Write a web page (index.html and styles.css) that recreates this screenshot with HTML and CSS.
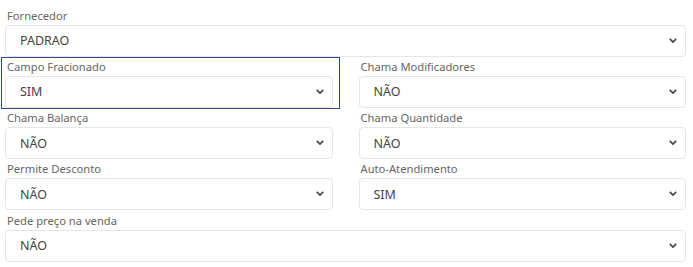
FILE: index.html
```html
<!DOCTYPE html>
<html lang="pt-BR">
<head>
    <meta charset="UTF-8">
    <meta name="viewport" content="width=device-width, initial-scale=1.0">
    <title>Produto - Configurações</title>
    <link rel="stylesheet" href="styles.css">
</head>
<body>

    <form class="product-form">
        <div class="form-group full">
            <label for="fornecedor">Fornecedor</label>
            <div class="select-wrap">
                <select id="fornecedor" name="fornecedor">
                    <option>PADRAO</option>
                </select>
                <svg class="chevron" viewBox="0 0 10 6"><path d="M1 1l4 4 4-4"/></svg>
            </div>
        </div>

        <div class="form-group focused">
            <label for="campoFracionado">Campo Fracionado</label>
            <div class="select-wrap">
                <select id="campoFracionado" name="campoFracionado">
                    <option>SIM</option>
                    <option>NÃO</option>
                </select>
                <svg class="chevron" viewBox="0 0 10 6"><path d="M1 1l4 4 4-4"/></svg>
            </div>
        </div>

        <div class="form-group">
            <label for="chamaModificadores">Chama Modificadores</label>
            <div class="select-wrap">
                <select id="chamaModificadores" name="chamaModificadores">
                    <option>NÃO</option>
                    <option>SIM</option>
                </select>
                <svg class="chevron" viewBox="0 0 10 6"><path d="M1 1l4 4 4-4"/></svg>
            </div>
        </div>

        <div class="form-group">
            <label for="chamaBalanca">Chama Balança</label>
            <div class="select-wrap">
                <select id="chamaBalanca" name="chamaBalanca">
                    <option>NÃO</option>
                    <option>SIM</option>
                </select>
                <svg class="chevron" viewBox="0 0 10 6"><path d="M1 1l4 4 4-4"/></svg>
            </div>
        </div>

        <div class="form-group">
            <label for="chamaQuantidade">Chama Quantidade</label>
            <div class="select-wrap">
                <select id="chamaQuantidade" name="chamaQuantidade">
                    <option>NÃO</option>
                    <option>SIM</option>
                </select>
                <svg class="chevron" viewBox="0 0 10 6"><path d="M1 1l4 4 4-4"/></svg>
            </div>
        </div>

        <div class="form-group">
            <label for="permiteDesconto">Permite Desconto</label>
            <div class="select-wrap">
                <select id="permiteDesconto" name="permiteDesconto">
                    <option>NÃO</option>
                    <option>SIM</option>
                </select>
                <svg class="chevron" viewBox="0 0 10 6"><path d="M1 1l4 4 4-4"/></svg>
            </div>
        </div>

        <div class="form-group">
            <label for="autoAtendimento">Auto-Atendimento</label>
            <div class="select-wrap">
                <select id="autoAtendimento" name="autoAtendimento">
                    <option>SIM</option>
                    <option>NÃO</option>
                </select>
                <svg class="chevron" viewBox="0 0 10 6"><path d="M1 1l4 4 4-4"/></svg>
            </div>
        </div>

        <div class="form-group full">
            <label for="pedePreco">Pede preço na venda</label>
            <div class="select-wrap">
                <select id="pedePreco" name="pedePreco">
                    <option>NÃO</option>
                    <option>SIM</option>
                </select>
                <svg class="chevron" viewBox="0 0 10 6"><path d="M1 1l4 4 4-4"/></svg>
            </div>
        </div>
    </form>

</body>
</html>
```

FILE: styles.css
```css
body {
    font-family: "Noto Sans", Arial, sans-serif;
    background-color: #fff;
    margin: 0;
}

.product-form {
    display: grid;
    grid-template-columns: 1fr 1fr;
    column-gap: 26px;
    row-gap: 1.3px;
    padding: 6.5px 7px 0 5px;
}

.form-group {
    position: relative;
}

.form-group.full {
    grid-column: 1 / -1;
}

/* focus frame around the active field */
.form-group.focused::after {
    content: "";
    position: absolute;
    left: -4px;
    right: -7px;
    top: -1px;
    bottom: -1px;
    border: 1px solid #2a4a8a;
    pointer-events: none;
}

label {
    display: block;
    font-size: 11.2px;
    line-height: 18px;
    color: #666;
    padding-left: 2px;
}

.select-wrap {
    position: relative;
}

select {
    -webkit-appearance: none;
    appearance: none;
    display: block;
    width: 100%;
    height: 32px;
    padding: 0 30px 0 14px;
    font-family: inherit;
    font-size: 12.5px;
    color: #444;
    background-color: #fff;
    border: 1px solid #e6e6e6;
    border-radius: 4px;
    outline: none;
}

.chevron {
    position: absolute;
    right: 9px;
    top: 13px;
    width: 8px;
    height: 5px;
    fill: none;
    stroke: #4a4a4a;
    stroke-width: 2.2;
    pointer-events: none;
}
```
